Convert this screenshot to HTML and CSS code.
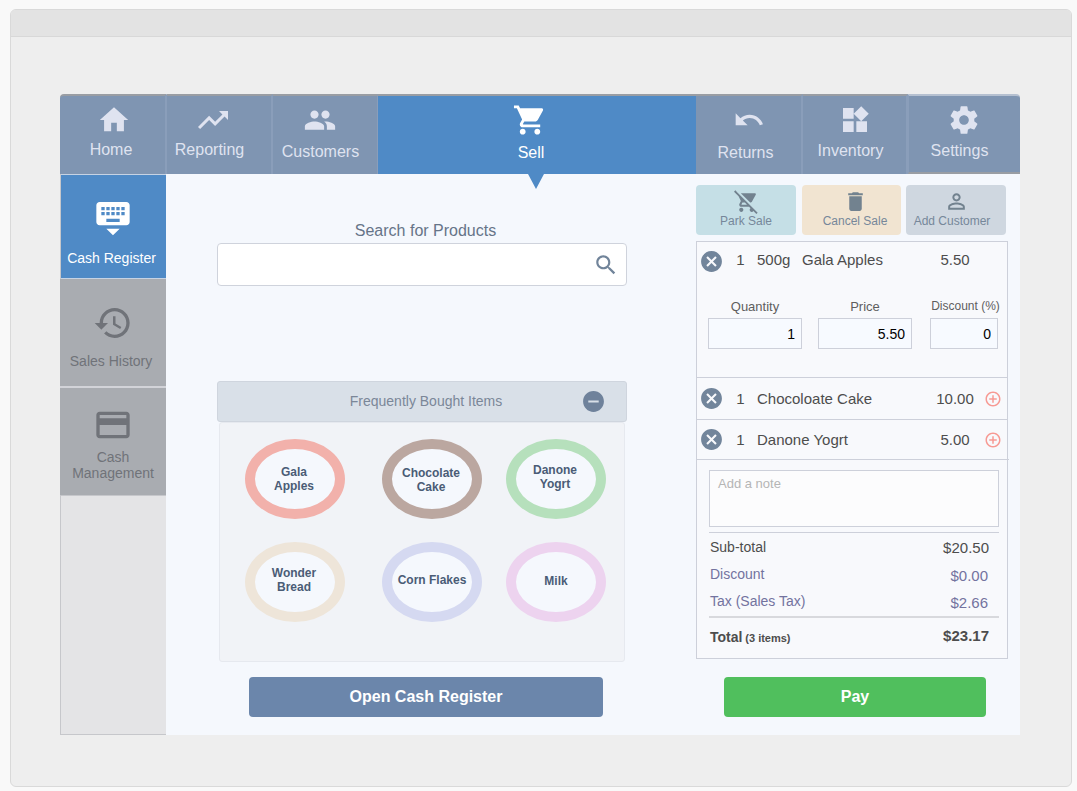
FILE: index.html

```html
<!DOCTYPE html>
<html lang="en">
<head>
    <meta charset="UTF-8">
    <title>Sell</title>
    <link rel="stylesheet" href="styles.css">
</head>
<body>
    <div class="window">
        <div class="titlebar"></div>
        <div class="screen">
            <div class="app">
                <nav class="tabs">
                    <a class="tab tab-home">
                        <svg class="tab-icon" viewBox="0 0 24 24"><path d="M10 20v-6h4v6h5v-8h3L12 3 2 12h3v8z"/></svg>
                        <span class="tab-label">Home</span>
                    </a>
                    <a class="tab tab-reporting">
                        <svg class="tab-icon" viewBox="0 0 24 24"><path d="M16 6l2.29 2.29-4.88 4.88-4-4L2 16.59 3.41 18l6-6 4 4 6.3-6.29L22 12V6z"/></svg>
                        <span class="tab-label">Reporting</span>
                    </a>
                    <a class="tab tab-customers">
                        <svg class="tab-icon" viewBox="0 0 24 24"><path d="M16 11c1.66 0 2.99-1.34 2.99-3S17.66 5 16 5c-1.66 0-3 1.34-3 3s1.34 3 3 3zm-8 0c1.66 0 2.99-1.34 2.99-3S9.66 5 8 5C6.34 5 5 6.34 5 8s1.34 3 3 3zm0 2c-2.33 0-7 1.17-7 3.5V19h14v-2.5c0-2.33-4.67-3.5-7-3.5zm8 0c-.29 0-.62.02-.97.05 1.16.84 1.97 1.97 1.97 3.45V19h6v-2.5c0-2.33-4.67-3.5-7-3.5z"/></svg>
                        <span class="tab-label">Customers</span>
                    </a>
                    <a class="tab tab-sell">
                        <svg class="tab-icon" viewBox="0 0 24 24"><path d="M7 18c-1.1 0-1.99.9-1.99 2S5.9 22 7 22s2-.9 2-2-.9-2-2-2zM1 2v2h2l3.6 7.59-1.35 2.45c-.16.28-.25.61-.25.96 0 1.1.9 2 2 2h12v-2H7.42c-.14 0-.25-.11-.25-.25l.03-.12.9-1.63h7.45c.75 0 1.41-.41 1.75-1.03l3.58-6.49c.08-.14.12-.31.12-.48 0-.55-.45-1-1-1H5.21l-.94-2H1zm16 16c-1.1 0-1.99.9-1.99 2s.89 2 1.99 2 2-.9 2-2-.9-2-2-2z"/></svg>
                        <span class="tab-label">Sell</span>
                    </a>
                    <a class="tab tab-returns">
                        <svg class="tab-icon" viewBox="0 0 24 24"><path d="M12.5 8c-2.65 0-5.05.99-6.9 2.6L2 7v9h9l-3.62-3.62c1.39-1.16 3.16-1.88 5.12-1.88 3.54 0 6.55 2.31 7.6 5.5l2.37-.78C21.08 11.03 17.15 8 12.5 8z"/></svg>
                        <span class="tab-label">Returns</span>
                    </a>
                    <a class="tab tab-inventory">
                        <svg class="tab-icon" viewBox="0 0 24 24"><path d="M13 13v8h8v-8h-8zM3 21h8v-8H3v8zM3 3v8h8V3H3zm13.66-1.31L11 7.34 16.66 13l5.66-5.66-5.66-5.65z"/></svg>
                        <span class="tab-label">Inventory</span>
                    </a>
                    <a class="tab tab-settings">
                        <svg class="tab-icon" viewBox="0 0 24 24"><path d="M19.43 12.98c.04-.32.07-.64.07-.98s-.03-.66-.07-.98l2.11-1.65c.19-.15.24-.42.12-.64l-2-3.46c-.12-.22-.39-.3-.61-.22l-2.49 1c-.52-.4-1.08-.73-1.69-.98l-.38-2.65C14.46 2.18 14.25 2 14 2h-4c-.25 0-.46.18-.49.42l-.38 2.65c-.61.25-1.17.59-1.69.98l-2.49-1c-.23-.09-.49 0-.61.22l-2 3.46c-.13.22-.07.49.12.64l2.11 1.65c-.04.32-.07.65-.07.98s.03.66.07.98l-2.11 1.65c-.19.15-.24.42-.12.64l2 3.46c.12.22.39.3.61.22l2.49-1c.52.4 1.08.73 1.69.98l.38 2.65c.03.24.24.42.49.42h4c.25 0 .46-.18.49-.42l.38-2.65c.61-.25 1.17-.59 1.69-.98l2.49 1c.23.09.49 0 .61-.22l2-3.46c.12-.22.07-.49-.12-.64l-2.11-1.65zM12 15.5c-1.93 0-3.5-1.57-3.5-3.5s1.57-3.5 3.5-3.5 3.5 1.57 3.5 3.5-1.57 3.5-3.5 3.5z"/></svg>
                        <span class="tab-label">Settings</span>
                    </a>
                </nav>

                <div class="body">
                    <aside class="sidebar">
                        <a class="side-item side-register">
                            <svg class="side-icon" viewBox="0 0 24 24"><path d="M20 3H4c-1.1 0-1.99.9-1.99 2L2 15c0 1.1.9 2 2 2h16c1.1 0 2-.9 2-2V5c0-1.1-.9-2-2-2zm-9 3h2v2h-2V6zm0 3h2v2h-2V9zM8 6h2v2H8V6zm0 3h2v2H8V9zm-1 2H5V9h2v2zm0-3H5V6h2v2zm9 7H8v-2h8v2zm0-4h-2V9h2v2zm0-3h-2V6h2v2zm3 3h-2V9h2v2zm0-3h-2V6h2v2zm-7 15l4-4H8l4 4z"/></svg>
                            <span>Cash Register</span>
                        </a>
                        <a class="side-item side-history">
                            <svg class="side-icon" viewBox="0 0 24 24"><path d="M13 3c-4.97 0-9 4.03-9 9H1l3.89 3.89.07.14L9 12H6c0-3.87 3.13-7 7-7s7 3.13 7 7-3.13 7-7 7c-1.93 0-3.68-.79-4.94-2.06l-1.42 1.42C8.27 19.99 10.51 21 13 21c4.97 0 9-4.03 9-9s-4.03-9-9-9zm-1 5v5l4.28 2.54.72-1.21-3.5-2.08V8H12z"/></svg>
                            <span>Sales History</span>
                        </a>
                        <a class="side-item side-cash">
                            <svg class="side-icon" viewBox="0 0 24 24"><path d="M20 4H4c-1.11 0-1.99.89-1.99 2L2 18c0 1.11.89 2 2 2h16c1.11 0 2-.89 2-2V6c0-1.11-.89-2-2-2zm0 14H4v-6h16v6zm0-10H4V6h16v2z"/></svg>
                            <span>Cash<br>Management</span>
                        </a>
                    </aside>

                    <main class="products">
                        <div class="search-label">Search for Products</div>
                        <div class="search-box">
                            <input class="search-input" type="text">
                            <svg class="search-icon" viewBox="0 0 24 24"><path d="M15.5 14h-.79l-.28-.27C15.41 12.59 16 11.11 16 9.5 16 5.91 13.09 3 9.5 3S3 5.91 3 9.5 5.91 16 9.5 16c1.61 0 3.09-.59 4.23-1.57l.27.28v.79l5 4.99L20.49 19l-4.99-5zm-6 0C7.01 14 5 11.99 5 9.5S7.01 5 9.5 5 14 7.01 14 9.5 11.99 14 9.5 14z"/></svg>
                        </div>
                        <div class="section-bar">
                            <span class="section-title">Frequently Bought Items</span>
                            <svg class="section-icon" viewBox="0 0 24 24"><path d="M12 2C6.48 2 2 6.48 2 12s4.48 10 10 10 10-4.48 10-10S17.52 2 12 2zm5 11H7v-2h10v2z"/></svg>
                        </div>
                        <div class="quick-items">
                            <div class="oval oval-red oval-left">Gala<br>Apples</div>
                            <div class="oval oval-brown oval-left">Chocolate<br>Cake</div>
                            <div class="oval oval-green oval-up oval-left">Danone<br>Yogrt</div>
                            <div class="oval oval-sand oval-up oval-left">Wonder<br>Bread</div>
                            <div class="oval oval-blue oval-up">Corn Flakes</div>
                            <div class="oval oval-pink oval-up">Milk</div>
                        </div>
                        <button class="btn-register">Open Cash Register</button>
                    </main>

                    <section class="sale">
                        <div class="sale-actions">
                            <a class="action action-park">
                                <svg class="action-icon" viewBox="0 0 24 24"><path d="M22.73 22.73L2.77 2.77 2 2l-.73-.73L0 2.54l4.39 4.39 2.21 4.66-1.35 2.45c-.16.28-.25.61-.25.96 0 1.1.9 2 2 2h7.46l1.38 1.38c-.5.36-.83.95-.83 1.62 0 1.1.89 2 1.99 2 .67 0 1.26-.33 1.62-.84L21.46 24l1.27-1.27zM7.42 15c-.14 0-.25-.11-.25-.25l.03-.12.9-1.63h2.36l2 2H7.42zm8.13-2c.75 0 1.41-.41 1.75-1.03l3.58-6.49c.08-.14.12-.31.12-.48 0-.55-.45-1-1-1H6.54l9.01 9zM7 18c-1.1 0-1.99.9-1.99 2S5.9 22 7 22s2-.9 2-2-.9-2-2-2z"/></svg>
                                <span>Park Sale</span>
                            </a>
                            <a class="action action-cancel">
                                <svg class="action-icon" viewBox="0 0 24 24"><path d="M6 19c0 1.1.9 2 2 2h8c1.1 0 2-.9 2-2V7H6v12zM19 4h-3.5l-1-1h-5l-1 1H5v2h14V4z"/></svg>
                                <span>Cancel Sale</span>
                            </a>
                            <a class="action action-customer">
                                <svg class="action-icon" viewBox="0 0 24 24"><path d="M12 5.9c1.16 0 2.1.94 2.1 2.1s-.94 2.1-2.1 2.1S9.9 9.16 9.9 8s.94-2.1 2.1-2.1m0 9c2.97 0 6.1 1.46 6.1 2.1v1.1H5.9V17c0-.64 3.13-2.1 6.1-2.1M12 4C9.79 4 8 5.79 8 8s1.79 4 4 4 4-1.79 4-4-1.79-4-4-4zm0 9c-2.67 0-8 1.34-8 4v3h16v-3c0-2.66-5.33-4-8-4z"/></svg>
                                <span>Add Customer</span>
                            </a>
                        </div>

                        <div class="cart">
                            <div class="cart-item cart-item-open">
                                <div class="cart-row">
                                    <svg class="cart-remove" viewBox="0 0 24 24"><path d="M12 2C6.47 2 2 6.47 2 12s4.47 10 10 10 10-4.47 10-10S17.53 2 12 2zm5 13.59L15.59 17 12 13.41 8.41 17 7 15.59 10.59 12 7 8.41 8.41 7 12 10.59 15.59 7 17 8.41 13.41 12 17 15.59z"/></svg>
                                    <span class="cart-qty">1</span>
                                    <span class="cart-size">500g</span>
                                    <span class="cart-name">Gala Apples</span>
                                    <span class="cart-price">5.50</span>
                                </div>
                                <div class="cart-fields">
                                    <label class="field field-wide">
                                        <span class="field-label">Quantity</span>
                                        <input class="field-input" type="text" value="1">
                                    </label>
                                    <label class="field field-wide">
                                        <span class="field-label">Price</span>
                                        <input class="field-input" type="text" value="5.50">
                                    </label>
                                    <label class="field field-narrow">
                                        <span class="field-label field-label-small">Discount (%)</span>
                                        <input class="field-input" type="text" value="0">
                                    </label>
                                </div>
                            </div>
                            <div class="cart-item">
                                <div class="cart-row">
                                    <svg class="cart-remove" viewBox="0 0 24 24"><path d="M12 2C6.47 2 2 6.47 2 12s4.47 10 10 10 10-4.47 10-10S17.53 2 12 2zm5 13.59L15.59 17 12 13.41 8.41 17 7 15.59 10.59 12 7 8.41 8.41 7 12 10.59 15.59 7 17 8.41 13.41 12 17 15.59z"/></svg>
                                    <span class="cart-qty">1</span>
                                    <span class="cart-name">Chocoloate Cake</span>
                                    <span class="cart-price">10.00</span>
                                    <svg class="cart-expand" viewBox="0 0 24 24"><path d="M13 7h-2v4H7v2h4v4h2v-4h4v-2h-4V7zm-1-5C6.48 2 2 6.48 2 12s4.48 10 10 10 10-4.48 10-10S17.52 2 12 2zm0 18c-4.41 0-8-3.59-8-8s3.59-8 8-8 8 3.59 8 8-3.59 8-8 8z"/></svg>
                                </div>
                            </div>
                            <div class="cart-item cart-item-last">
                                <div class="cart-row">
                                    <svg class="cart-remove" viewBox="0 0 24 24"><path d="M12 2C6.47 2 2 6.47 2 12s4.47 10 10 10 10-4.47 10-10S17.53 2 12 2zm5 13.59L15.59 17 12 13.41 8.41 17 7 15.59 10.59 12 7 8.41 8.41 7 12 10.59 15.59 7 17 8.41 13.41 12 17 15.59z"/></svg>
                                    <span class="cart-qty">1</span>
                                    <span class="cart-name">Danone Yogrt</span>
                                    <span class="cart-price">5.00</span>
                                    <svg class="cart-expand" viewBox="0 0 24 24"><path d="M13 7h-2v4H7v2h4v4h2v-4h4v-2h-4V7zm-1-5C6.48 2 2 6.48 2 12s4.48 10 10 10 10-4.48 10-10S17.52 2 12 2zm0 18c-4.41 0-8-3.59-8-8s3.59-8 8-8 8 3.59 8 8-3.59 8-8 8z"/></svg>
                                </div>
                            </div>
                            <div class="cart-summary">
                                <textarea class="cart-note" placeholder="Add a note"></textarea>
                                <div class="sum-row sum-first">
                                    <span>Sub-total</span><span class="sum-value">$20.50</span>
                                </div>
                                <div class="sum-row sum-muted">
                                    <span>Discount</span><span class="sum-value">$0.00</span>
                                </div>
                                <div class="sum-row sum-muted">
                                    <span>Tax (Sales Tax)</span><span class="sum-value">$2.66</span>
                                </div>
                                <div class="sum-row sum-total">
                                    <span>Total <small>(3 items)</small></span><span class="sum-value">$23.17</span>
                                </div>
                            </div>
                        </div>
                        <button class="btn-pay">Pay</button>
                    </section>
                </div>
            </div>
        </div>
    </div>
</body>
</html>
```

FILE: styles.css

```css
* {
    box-sizing: border-box;
}
body {
    margin: 0;
    background: #f9f9f9;
    font-family: 'Liberation Sans', Arial, sans-serif;
    overflow: hidden;
}
a {
    display: block;
}
svg {
    display: block;
    fill: currentColor;
    flex-shrink: 0;
}

/* window frame */
.window {
    width: 1062px;
    height: 778px;
    margin: 9px 0 0 10px;
    background: #eeeeee;
    border: 1px solid #d9d9d9;
    border-radius: 6px;
    overflow: hidden;
}
.titlebar {
    height: 27px;
    background: #e3e3e3;
    border-bottom: 1px solid #d8d8d8;
}
.screen {
    padding: 57px 0 0 49px;
}
.app {
    width: 960px;
    height: 641px;
}

/* top tabs */
.tabs {
    display: flex;
    height: 80px;
}
.tab {
    display: flex;
    flex-direction: column;
    align-items: center;
    height: 80px;
    padding-top: 6px;
    background: #7f95b2;
    border-top: 2px solid #999da3;
    border-right: 2px solid #8a9eba;
    color: #dfe3f0;
    font-size: 16px;
}
.tab-icon {
    width: 36px;
    height: 36px;
}
.tab-label {
    margin-top: 3px;
    line-height: 18px;
}
.tab-home {
    width: 107px;
    padding-left: 2px;
    border-top-left-radius: 4px;
}
.tab-home .tab-icon {
    padding: 1px;
}
.tab-home .tab-label {
    margin-right: 5px;
}
.tab-reporting {
    width: 106px;
    padding-right: 12px;
}
.tab-reporting .tab-label {
    margin-right: 7px;
}
.tab-customers {
    width: 105px;
    padding-right: 11px;
    border-right: 1px solid #8a9eba;
}
.tab-customers .tab-icon {
    padding: 1.5px;
}
.tab-customers .tab-label {
    margin-top: 5px;
    margin-left: 2px;
}
.tab-sell {
    width: 318px;
    padding-right: 14px;
    background: #4f8ac6;
    border-right: 0;
    color: #fff;
    position: relative;
}
.tab-sell .tab-icon {
    padding: 0.5px;
}
.tab-sell .tab-label {
    margin-top: 6px;
    margin-left: 2px;
}
/* little arrow under the active tab */
.tab-sell::after {
    content: '';
    position: absolute;
    top: 78px;
    left: 150px;
    border-left: 8px solid transparent;
    border-right: 8px solid transparent;
    border-top: 15px solid #4f8ac6;
}
.tab-returns {
    width: 107px;
}
.tab-returns .tab-icon {
    padding: 2px;
}
.tab-returns .tab-label {
    margin-top: 6px;
    margin-right: 6px;
}
.tab-inventory {
    width: 105px;
}
.tab-inventory .tab-icon {
    padding: 2px;
}
.tab-inventory .tab-label {
    margin-top: 4px;
    margin-right: 8px;
}
.tab-settings {
    width: 112px;
    border-right: 0;
    border-top-color: #b5c0d0;
    border-bottom: 2px solid #999da3;
    border-left: 1px solid #8a9eba;
    border-top-right-radius: 4px;
}
.tab-settings .tab-icon {
    padding: 1.5px;
    margin-right: 1px;
}
.tab-settings .tab-label {
    margin-top: 4px;
    margin-right: 10px;
}

/* page body */
.body {
    display: flex;
    height: 561px;
    background: #f5f8fd;
}

/* left sidebar */
.sidebar {
    width: 106px;
    background: #e4e4e6;
    border-left: 1px solid #c6c7cb;
    border-bottom: 1px solid #c6c7cb;
}
.side-item {
    display: flex;
    flex-direction: column;
    align-items: center;
    margin-left: -1px;
    padding-right: 4px;
    background: #a9acb1;
    color: #707379;
    font-size: 14px;
    line-height: 16px;
    text-align: center;
}
.side-icon {
    width: 40px;
    height: 40px;
    margin-left: 4px;
}
.side-register {
    height: 105px;
    margin-left: 0;
    padding-top: 22px;
    background: #4f8ac6;
    border-bottom: 1px solid #c6d3e4;
    border-top: 1px solid #c6d3e4;
    color: #fff;
}
.side-register .side-icon {
    margin-left: 2px;
}
.side-register span {
    margin-top: 13px;
}
.side-history {
    height: 109px;
    padding-top: 24px;
    border-bottom: 2px solid #d2d3d8;
}
.side-history span {
    margin-top: 10px;
}
.side-cash {
    height: 108px;
    padding-top: 17px;
    padding-right: 0;
    border-bottom: 1px solid #c6c7cb;
}
.side-cash .side-icon {
    margin-left: 0;
}
.side-cash span {
    margin-top: 4px;
}

/* centre column */
.products {
    width: 530px;
    padding: 48px 0 0 51px;
}
.search-label {
    width: 410px;
    padding-left: 7px;
    color: #667488;
    font-size: 16px;
    line-height: 18px;
    text-align: center;
}
.search-box {
    display: flex;
    align-items: center;
    width: 410px;
    height: 43px;
    margin-top: 3px;
    padding: 0 7px 0 0;
    background: #fff;
    border: 1px solid #cfd3dc;
    border-radius: 4px;
}
.search-input {
    flex: 1;
    min-width: 0;
    height: 100%;
    background: transparent;
    border: 0;
    outline: 0;
}
.search-icon {
    width: 26px;
    height: 26px;
    color: #71849a;
}
.section-bar {
    display: flex;
    align-items: center;
    width: 410px;
    height: 41px;
    margin-top: 95px;
    padding-right: 20px;
    background: #d9e0e8;
    border: 1px solid #cfd5de;
    border-radius: 3px;
}
.section-title {
    flex: 1;
    padding: 0 0 2px 53px;
    color: #7b8798;
    font-size: 14px;
    text-align: center;
}
.section-icon {
    width: 25px;
    height: 25px;
    color: #6f829b;
}
.quick-items {
    display: grid;
    grid-template-columns: 137px 124px 100px;
    grid-auto-rows: 80px;
    row-gap: 23px;
    width: 406px;
    height: 240px;
    margin-left: 2px;
    padding: 16px 0 0 25px;
    background: #f1f3f7;
    border: 1px solid #e6e9ef;
    border-radius: 3px;
}
.oval {
    display: flex;
    align-items: center;
    justify-content: center;
    width: 100px;
    height: 80px;
    background: #f5f8fd;
    border: 10px solid;
    border-radius: 50%;
    color: #4a5c76;
    font-size: 12px;
    font-weight: bold;
    line-height: 14px;
    text-align: center;
}
.oval-up {
    padding-bottom: 4px;
}
.oval-left {
    padding-right: 2px;
}
.oval-red {
    border-color: #f2b1ab;
}
.oval-brown {
    padding-top: 2px;
    border-color: #bba7a0;
}
.oval-green {
    border-color: #b6e0bc;
}
.oval-sand {
    border-color: #eee5d9;
}
.oval-blue {
    border-color: #d5d9f1;
}
.oval-pink {
    padding-bottom: 2px;
    border-color: #edd3ef;
}
.btn-register {
    display: block;
    width: 354px;
    height: 40px;
    margin: 15px 0 0 32px;
    background: #6b86ab;
    border: 0;
    border-radius: 4px;
    color: #fff;
    font-family: inherit;
    font-size: 16px;
    font-weight: bold;
}

/* right column */
.sale {
    width: 324px;
    padding-top: 11px;
}
.sale-actions {
    display: flex;
    height: 50px;
}
.action {
    display: flex;
    flex-direction: column;
    align-items: center;
    width: 100px;
    padding-top: 4px;
    border-radius: 4px;
    color: #76879a;
    font-size: 12px;
    line-height: 14px;
}
.action-icon {
    width: 25px;
    height: 25px;
    color: #72828f;
}
.action-park {
    background: #c5dfe6;
}
.action-cancel {
    width: 99px;
    margin: 0 5px 0 6px;
    background: #f1e4d1;
    padding-left: 7px;
}
.action-customer {
    padding-right: 8px;
    background: #cfd7e0;
}
.action-customer .action-icon {
    margin-left: 8px;
}
.cart {
    width: 312px;
    height: 418px;
    margin-top: 6px;
    background: #f8f9fc;
    border: 1px solid #cdd0da;
}
.cart-item {
    border-bottom: 1px solid #cdd0da;
    color: #4d4d4d;
    font-size: 15px;
}
.cart-item-open {
    height: 136px;
}
.cart-item-last {
    margin-right: -2px;
}
.cart-item-last .cart-row {
    height: 39px;
    padding-right: 2px;
}
.cart-row {
    display: flex;
    align-items: center;
    height: 41px;
    padding-left: 2px;
}
.cart-item-open .cart-row {
    height: 38px;
}
.cart-item-open .cart-row span {
    margin-top: -3px;
}
.cart-remove {
    width: 25px;
    height: 25px;
    color: #72859b;
}
.cart-qty {
    width: 33px;
    text-align: center;
}
.cart-size {
    width: 45px;
}
.cart-name {
    flex: 1;
}
.cart-price {
    width: 50px;
    text-align: center;
}
.cart-item-open .cart-price {
    margin-right: 27px;
}
.cart-expand {
    width: 18px;
    height: 18px;
    margin: 0 5px 0 4px;
    color: #f79a94;
}
.cart-fields {
    display: flex;
    align-items: flex-end;
    gap: 16px;
    margin-top: 20px;
    padding-left: 11px;
}
.field {
    display: block;
    text-align: center;
}
.field-wide {
    width: 94px;
}
.field-narrow {
    width: 68px;
    margin-left: 2px;
}
.field-label {
    display: block;
    height: 18px;
    color: #5e5e5e;
    font-size: 13px;
    line-height: 14px;
    white-space: nowrap;
}
.field-label-small {
    margin: 0 -2px 0 1px;
    padding-bottom: 3px;
    font-size: 12px;
    line-height: 12px;
}
.field-input {
    display: block;
    width: 100%;
    height: 31px;
    padding: 0 6px;
    background: #f7faff;
    border: 1px solid #cdd0da;
    color: #000;
    font-family: inherit;
    font-size: 14px;
    text-align: right;
}
.cart-summary {
    padding: 10px 8px 0 12px;
}
.cart-note {
    display: block;
    width: 290px;
    height: 57px;
    padding: 5px 8px;
    background: #fcfcfd;
    border: 1px solid #cdd0da;
    font-family: inherit;
    font-size: 13px;
    resize: none;
}
.cart-note::placeholder {
    color: #b5b5b5;
}
.sum-row {
    display: flex;
    justify-content: space-between;
    align-items: center;
    width: 290px;
    height: 27px;
    padding: 0 10px 0 1px;
    color: #4d4d4d;
    font-size: 14px;
}
.sum-value {
    font-size: 15px;
}
.sum-first {
    height: 29px;
    margin-top: 5px;
    border-top: 1px solid #cdd0da;
}
.sum-muted {
    color: #73739f;
}
.sum-muted span:first-child {
    margin-bottom: 1px;
}
.sum-muted .sum-value {
    margin: 1px 1px 0 0;
}
.sum-total {
    height: 40px;
    margin-top: 1px;
    border-top: 2px solid #d8d9dd;
    font-weight: bold;
}
.sum-total small {
    margin-left: -1px;
    font-size: 11px;
}
.sum-total .sum-value {
    margin-bottom: 4px;
}
.btn-pay {
    display: block;
    width: 262px;
    height: 40px;
    margin: 18px 0 0 28px;
    background: #50bf5d;
    border: 0;
    border-radius: 4px;
    color: #fff;
    font-family: inherit;
    font-size: 16px;
    font-weight: bold;
}
```
